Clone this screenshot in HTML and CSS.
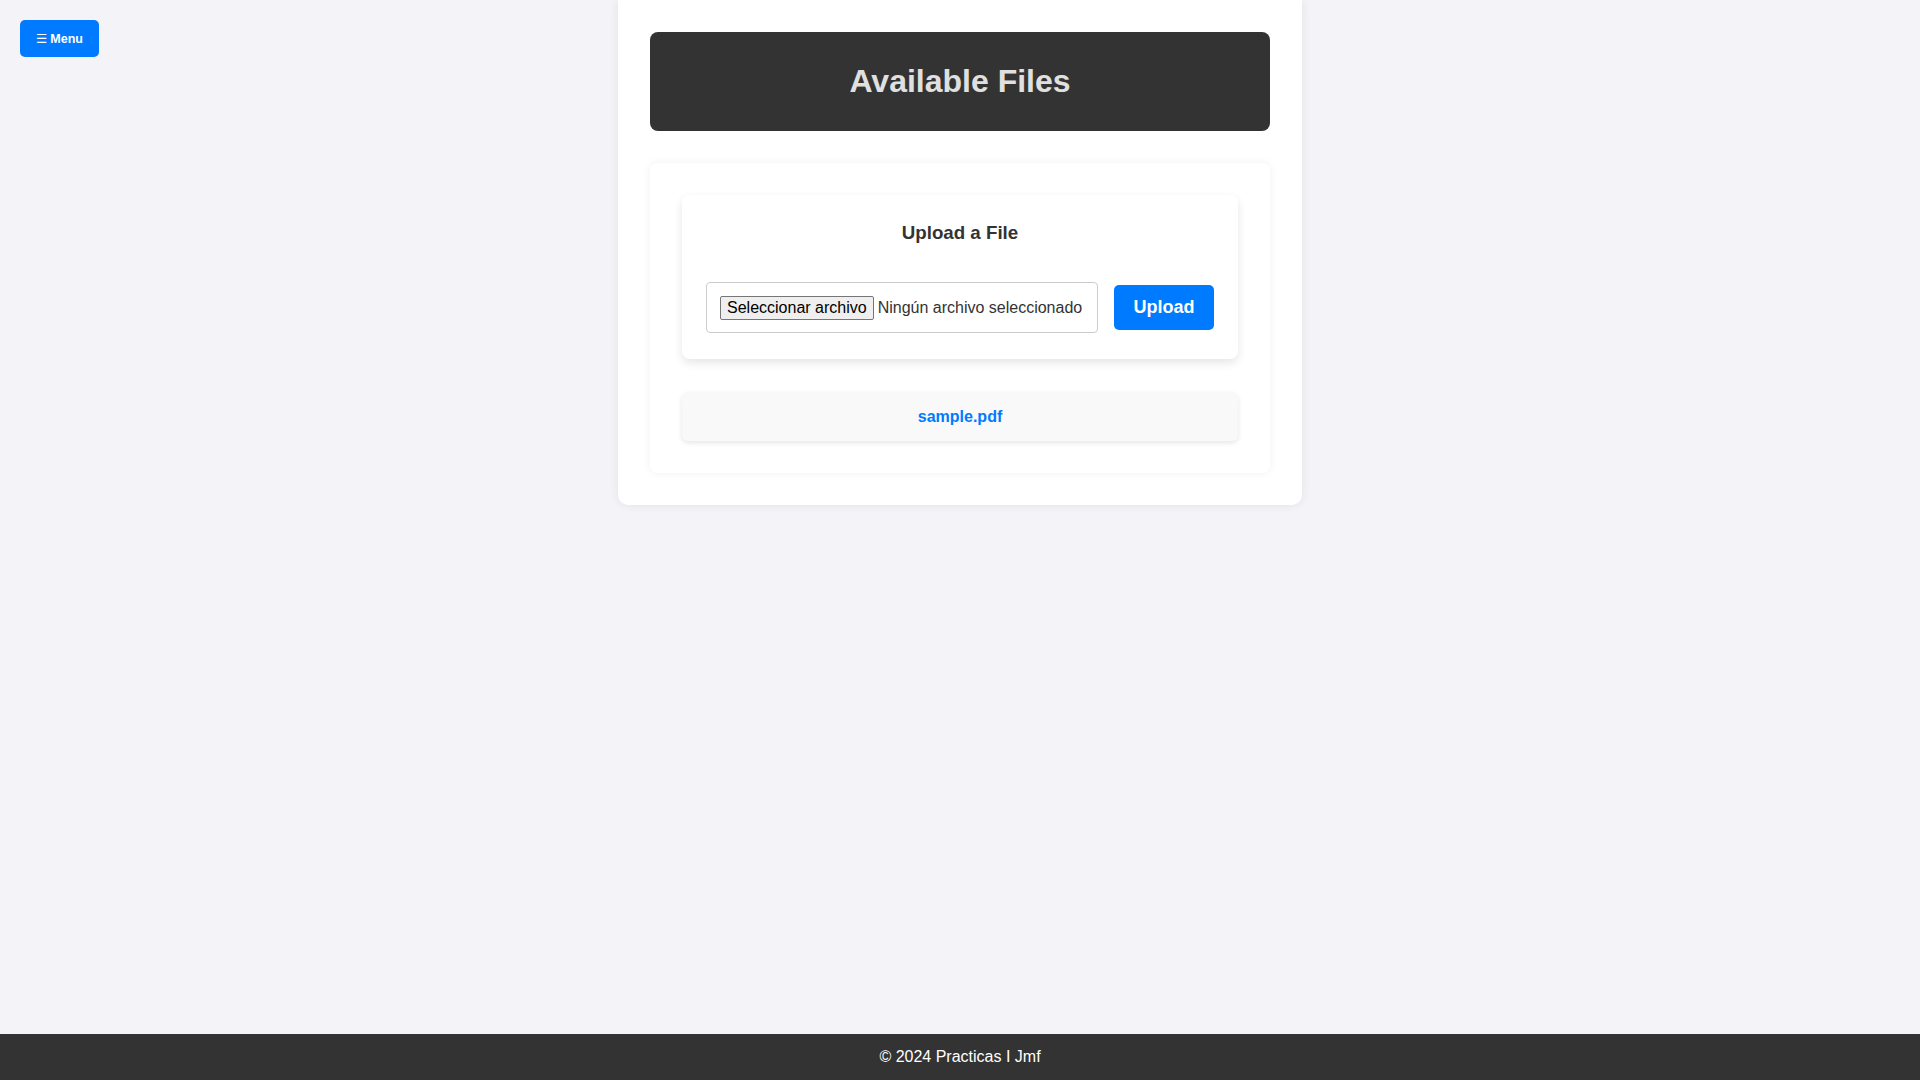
FILE: index.html
```html
<!DOCTYPE html>
<html lang="es">
<head>
<meta charset="utf-8">
<title>Available Files</title>
<link rel="stylesheet" href="styles.css">
</head>
<body>
<button class="menu-btn"><span class="menu-icon">☰</span> Menu</button>
<main class="page">
  <div class="container">
    <header class="header">
      <h1>Available Files</h1>
    </header>
    <section class="files-card">
      <div class="upload-card">
        <h3>Upload a File</h3>
        <form class="upload-form">
          <label class="file-input">
            <span class="file-btn">Seleccionar archivo</span>
            <span class="file-name">Ningún archivo seleccionado</span>
          </label>
          <button type="button" class="upload-btn">Upload</button>
        </form>
      </div>
      <ul class="file-list">
        <li class="file-item"><a href="#">sample.pdf</a></li>
      </ul>
    </section>
  </div>
</main>
<footer class="footer">© 2024 Practicas I Jmf</footer>
</body>
</html>
```
FILE: styles.css
```css
* { box-sizing: border-box; }

html, body {
  margin: 0;
  padding: 0;
}

body {
  font-family: "Liberation Sans", Arial, sans-serif;
  background: #f4f4f8;
  color: #333;
  min-height: 100vh;
  display: flex;
  flex-direction: column;
}

.menu-btn {
  position: fixed;
  top: 20px;
  left: 20px;
  background: #007bff;
  color: #fff;
  border: none;
  border-radius: 5px;
  padding: 0 14px;
  height: 37px;
  width: 79px;
  font-family: "Liberation Sans", Arial, sans-serif;
  font-size: 12.5px;
  font-weight: bold;
  display: flex;
  align-items: center;
  justify-content: center;
  gap: 3px;
  cursor: pointer;
}

.menu-icon {
  font-family: "DejaVu Sans", sans-serif;
  font-weight: normal;
  font-size: 12.5px;
}

.page {
  flex: 1;
}

.container {
  width: 684px;
  margin: 0 auto;
  background: #fff;
  padding: 32px;
  border-radius: 0 0 10px 10px;
  box-shadow: 0 0 10px rgba(0, 0, 0, 0.08);
}

.header {
  background: #333;
  border-radius: 8px;
  height: 99px;
  display: flex;
  align-items: center;
  justify-content: center;
}

.header h1 {
  margin: 0;
  color: #e0e0e0;
  font-size: 32px;
  font-weight: bold;
}

.files-card {
  margin-top: 32px;
  background: #fff;
  border-radius: 8px;
  padding: 32px;
  box-shadow: 0 0 10px rgba(0, 0, 0, 0.06);
}

.upload-card {
  background: #fff;
  border-radius: 8px;
  padding: 27px 24px 26px;
  box-shadow: 0 4px 10px rgba(0, 0, 0, 0.1);
}

.upload-card h3 {
  margin: 0 0 38px;
  text-align: center;
  font-size: 18.72px;
  color: #333;
}

.upload-form {
  display: flex;
  align-items: center;
  gap: 16px;
}

.file-input {
  flex: 1;
  height: 51px;
  border: 1px solid #ccc;
  border-radius: 4px;
  padding: 0 13px;
  display: flex;
  align-items: center;
  gap: 4px;
  font-size: 16px;
  color: #333;
  white-space: nowrap;
}

.file-btn {
  background: #efefef;
  border: 1px solid #767676;
  border-radius: 2px;
  color: #000;
  padding: 2px 6px;
  line-height: 18px;
}

.file-name {
  color: #333;
}

.upload-btn {
  background: #007bff;
  color: #fff;
  border: none;
  border-radius: 5px;
  width: 100px;
  height: 45px;
  font-family: "Liberation Sans", Arial, sans-serif;
  font-size: 18px;
  font-weight: bold;
  cursor: pointer;
}

.file-list {
  list-style: none;
  margin: 33px 0 0;
  padding: 0;
}

.file-item {
  background: #f9f9f9;
  border-radius: 6px;
  height: 49px;
  display: flex;
  align-items: center;
  justify-content: center;
  box-shadow: 0 2px 5px rgba(0, 0, 0, 0.1);
}

.file-item a {
  color: #007bff;
  font-weight: bold;
  font-size: 16px;
  text-decoration: none;
}

.footer {
  background: #333;
  color: #fff;
  text-align: center;
  font-size: 16px;
  height: 46px;
  line-height: 46px;
}
```
